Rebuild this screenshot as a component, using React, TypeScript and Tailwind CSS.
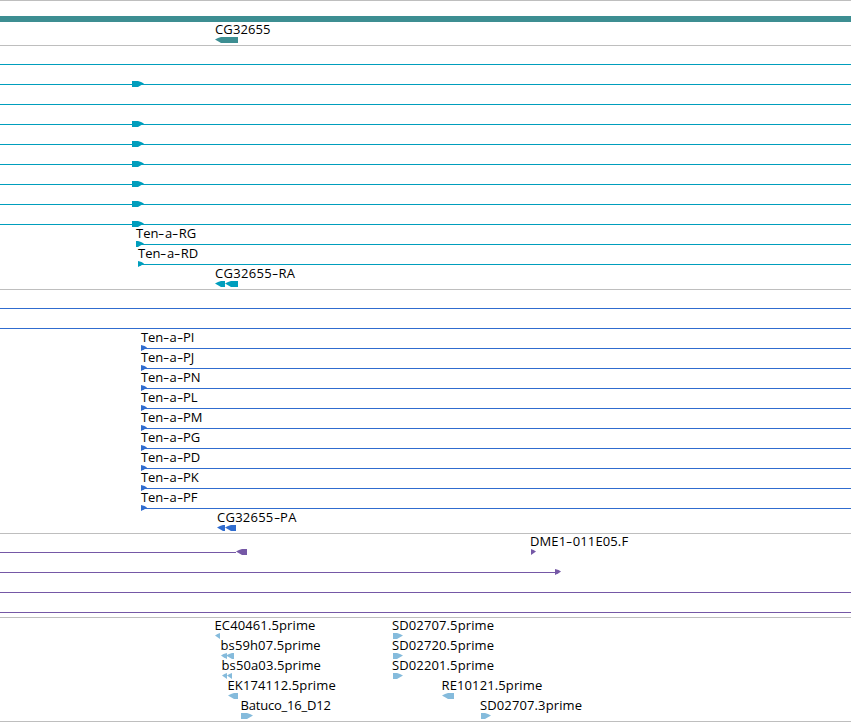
import { Fragment } from "react";

type Arrow = {
  x: number;
  width: number;
  dir: "left" | "right";
};

type Label = {
  x: number;
  text: string;
  tracking?: string;
};

type RowData = {
  // start and end of the intron line
  line?: [number, number];
  arrows?: Arrow[];
  labels?: Label[];
};

type TrackProps = {
  color: string;
  rows: RowData[];
};

const WIDTH = 851;

const right = (x: number, width: number): Arrow => ({ x, width, dir: "right" });
const left = (x: number, width: number): Arrow => ({ x, width, dir: "left" });

const fullLine: RowData = { line: [0, WIDTH] };
const exonLine: RowData = { line: [0, WIDTH], arrows: [right(132, 12)] };

const transcripts: RowData[] = [
  fullLine,
  exonLine,
  fullLine,
  exonLine,
  exonLine,
  exonLine,
  exonLine,
  exonLine,
  exonLine,
  {
    line: [136, WIDTH],
    arrows: [right(136, 8)],
    labels: [{ x: 136, text: "Ten-a-RG", tracking: "tracking-normal" }],
  },
  {
    line: [138, WIDTH],
    arrows: [right(138, 6)],
    labels: [{ x: 138, text: "Ten-a-RD", tracking: "tracking-normal" }],
  },
  {
    arrows: [left(215, 10), left(225, 13)],
    labels: [{ x: 215, text: "CG32655-RA", tracking: "tracking-[0.3px]" }],
  },
];

const proteinNames = ["PI", "PJ", "PN", "PL", "PM", "PG", "PD", "PK", "PF"];

const proteins: RowData[] = [
  fullLine,
  fullLine,
  ...proteinNames.map((name) => ({
    line: [141, WIDTH] as [number, number],
    arrows: [right(141, 6)],
    labels: [{ x: 141, text: "Ten-a-" + name, tracking: "tracking-[-0.15px]" }],
  })),
  {
    arrows: [left(217, 8), left(225, 11)],
    labels: [{ x: 217, text: "CG32655-PA", tracking: "tracking-[0.25px]" }],
  },
];

const insertions: RowData[] = [
  {
    line: [0, 236],
    arrows: [left(236, 11), right(531, 5)],
    labels: [{ x: 530, text: "DME1-011E05.F" }],
  },
  { line: [0, 555], arrows: [right(555, 6)] },
  fullLine,
  fullLine,
];

const ests: RowData[] = [
  {
    arrows: [left(215, 5), right(393, 10)],
    labels: [
      { x: 214.5, text: "EC40461.5prime" },
      { x: 392, text: "SD02707.5prime" },
    ],
  },
  {
    arrows: [left(221, 6), left(226, 8), right(393, 10)],
    labels: [
      { x: 220.5, text: "bs59h07.5prime" },
      { x: 392, text: "SD02720.5prime" },
    ],
  },
  {
    arrows: [left(222, 5), left(227, 5), right(393, 10)],
    labels: [
      { x: 221.5, text: "bs50a03.5prime" },
      { x: 392, text: "SD02201.5prime" },
    ],
  },
  {
    arrows: [left(228, 10), left(442, 12)],
    labels: [
      { x: 227.5, text: "EK174112.5prime" },
      { x: 441.5, text: "RE10121.5prime" },
    ],
  },
  {
    arrows: [right(241, 12), right(481, 10)],
    labels: [
      { x: 240.5, text: "Batuco_16_D12", tracking: "tracking-[-0.2px]" },
      { x: 480, text: "SD02707.3prime" },
    ],
  },
];

function ArrowShape({ x, width, dir }: Arrow) {
  const head = Math.min(width, 6);
  const shoulder = width > 6 ? 3 : 2.5;
  const points = `0,0 ${width - head},0 ${width - shoulder},1 ${width},2.5 ${width - shoulder},4.3 ${width - head},6 0,6`;
  return (
    <svg
      className={
        "[grid-area:1/1] mt-[15px] block h-[6px]" +
        (dir === "left" ? " -scale-x-100" : "")
      }
      style={{ marginLeft: x, width }}
      viewBox={`0 0 ${width} 6`}
      fill="currentColor"
    >
      <polygon points={points} />
    </svg>
  );
}

function LabelText({ x, text, tracking = "tracking-[0.12px]" }: Label) {
  return (
    <span
      className={
        "[grid-area:1/1] -mt-px h-[16px] whitespace-pre text-[13px] leading-[16px] text-black " +
        tracking
      }
      style={{ marginLeft: x }}
    >
      {text.split("-").map((part, i) => (
        <Fragment key={i}>
          {i > 0 && <span className="inline-block w-[6.5px] origin-left scale-x-150">-</span>}
          {part}
        </Fragment>
      ))}
    </span>
  );
}

function Row({ line, arrows = [], labels = [] }: RowData) {
  return (
    <div className="grid h-5 grid-cols-[851px] grid-rows-[20px] items-start justify-items-start">
      {line && (
        <div
          className="[grid-area:1/1] mt-[18px] h-px bg-current"
          style={{ marginLeft: line[0], width: line[1] - line[0] }}
        />
      )}
      {arrows.map((arrow) => (
        <ArrowShape key={arrow.x} {...arrow} />
      ))}
      {labels.map((label) => (
        <LabelText key={label.x} {...label} />
      ))}
    </div>
  );
}

function Track({ color, rows }: TrackProps) {
  return (
    <section className={"border-t border-[#bebebe] pb-[3px] " + color}>
      {rows.map((row, i) => (
        <Row key={i} {...row} />
      ))}
    </section>
  );
}

export default function App() {
  return (
    <main className="h-[722px] w-[851px] overflow-hidden border-b border-[#bebebe] bg-white font-['Open_Sans',sans-serif] [font-kerning:none]">
      {/* genes */}
      <section className="border-t border-[#bebebe] pb-[3px] text-[#3d8e92]">
        <div className="h-[21px] pt-[15px]">
          <div className="h-[6px] bg-current" />
        </div>
        <Row arrows={[left(215, 23)]} labels={[{ x: 215, text: "CG32655" }]} />
      </section>
      <Track color="text-[#009ebd]" rows={transcripts} />
      <Track color="text-[#306ccf]" rows={proteins} />
      <Track color="text-[#7558a6]" rows={insertions} />
      <Track color="text-[#85bbdc]" rows={ests} />
    </main>
  );
}
